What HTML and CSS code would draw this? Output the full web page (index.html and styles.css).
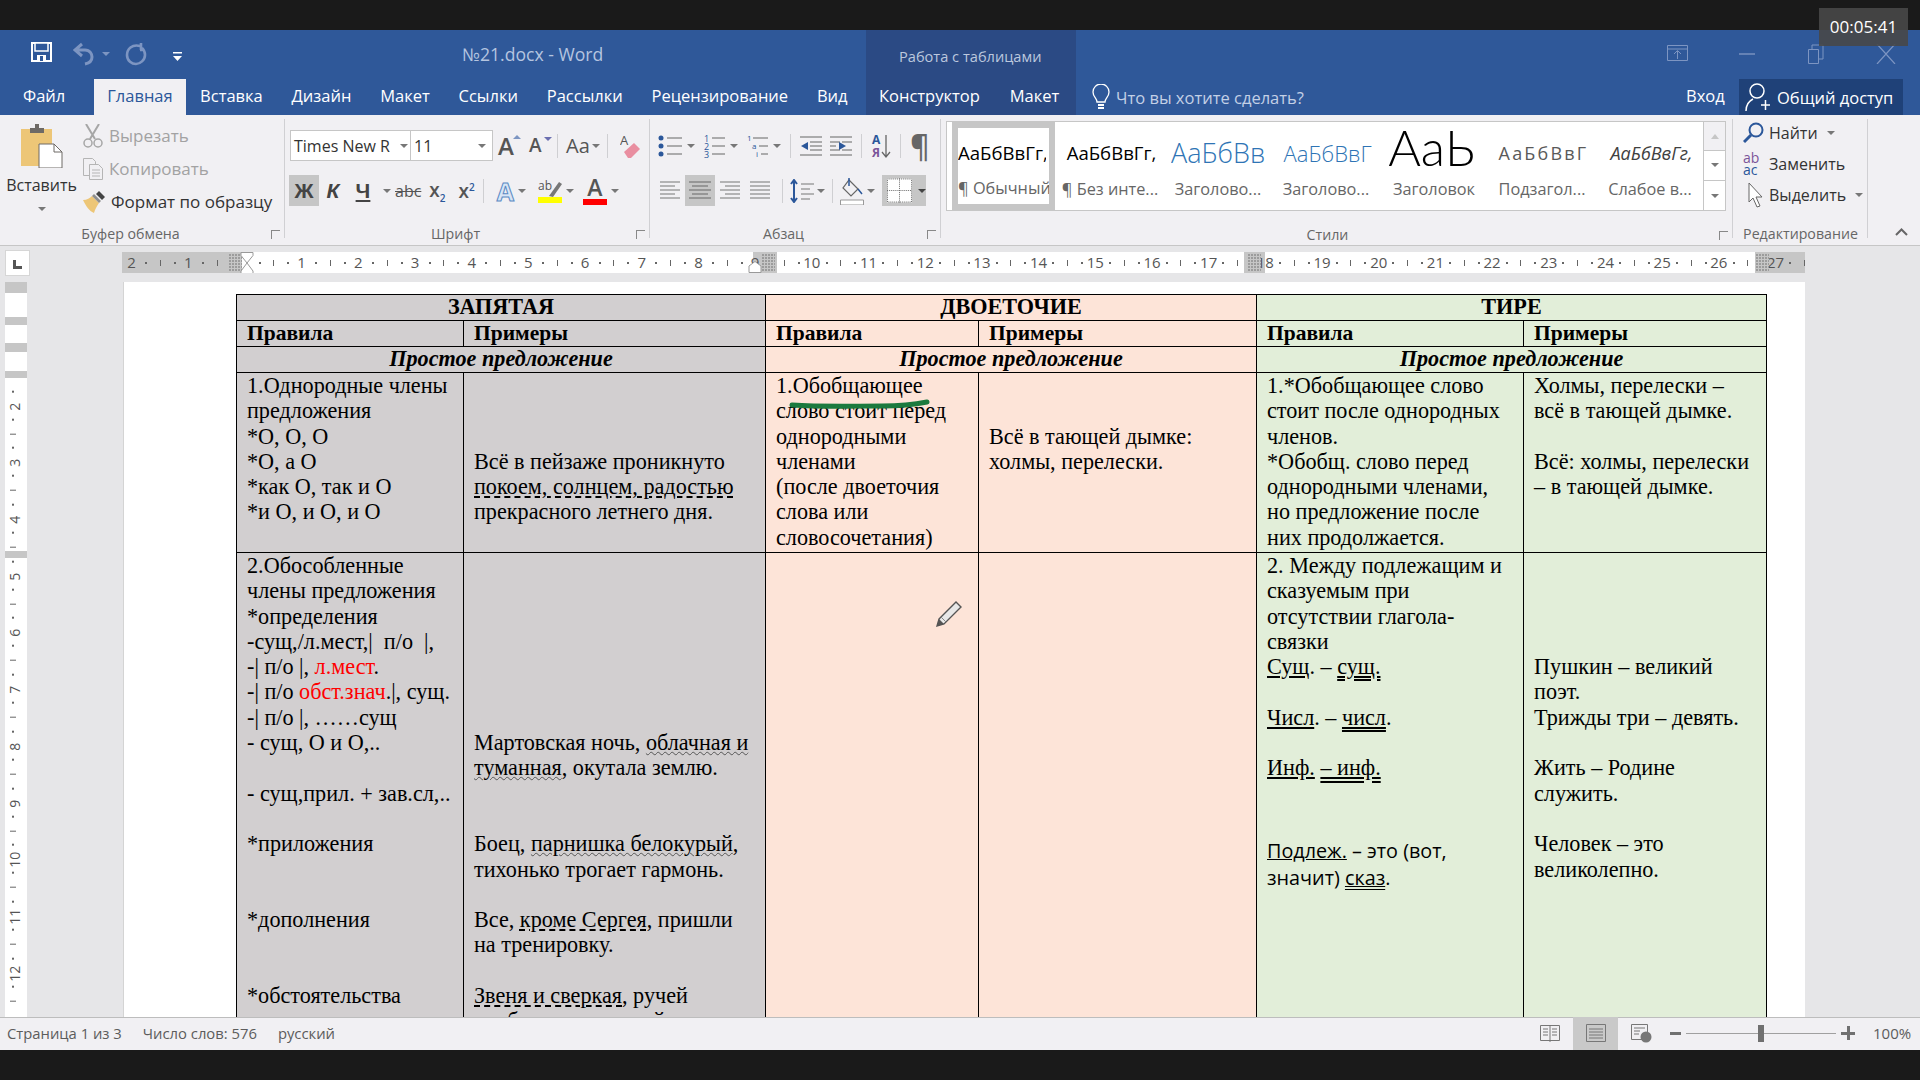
FILE: index.html
```html
<!DOCTYPE html>
<html lang="ru">
<head>
    <meta charset="UTF-8">
    <title>№21.docx - Word</title>
    <link rel="stylesheet" href="styles.css">
</head>
<body>
<div class="timer">00:05:41</div>
<div class="blackbar"></div>

<header class="head">
    <div class="title-row">
        <div class="qat">
            <svg width="21" height="20" viewBox="0 0 21 20"><path d="M1 1h19v18H1z" fill="none" stroke="#fff" stroke-width="2"/><path d="M4 1h13v8H4z" fill="#2f5899" stroke="#fff" stroke-width="1.5"/><path d="M6 13h9v6H6z" fill="#fff"/><path d="M9 14h3v5H9z" fill="#2f5899"/></svg>
            <svg class="undo" width="23" height="24" viewBox="0 0 23 24"><path d="M9 2 2 8l7 6M3 8h9c5 0 7 4 7 7s-2 6-7 7" fill="none" stroke="#7d95c2" stroke-width="3"/></svg>
            <span class="caret faded undo-caret"></span>
            <svg class="redo" width="22" height="24" viewBox="0 0 22 24"><path d="M15 4c-8-2-13 3-13 9s5 9 9 9 9-4 9-9c0-3-1-5-3-7M16 1v7h-1" fill="none" stroke="#7d95c2" stroke-width="2.6"/></svg>
            <svg class="qat-more" width="9" height="11" viewBox="0 0 9 11"><path d="M0 1h9v1.5H0z" fill="#fff"/><path d="M0 5h9L4.5 10z" fill="#fff"/></svg>
        </div>
        <div class="doc-title">№21.docx - Word</div>
        <div class="context-title">Работа с таблицами</div>
        <div class="win-btns">
            <svg width="21" height="16" viewBox="0 0 21 16"><path d="M.5.5h20v15H.5zM.5 4h20M10.500 14V6M7 9l3.500-3.500L14 9" fill="none" stroke="#7d95c2"/></svg>
            <svg class="win-min" width="16" height="2" viewBox="0 0 16 2"><path d="M0 1h16" stroke="#7d95c2" stroke-width="1.400"/></svg>
            <svg class="win-max" width="16" height="20" viewBox="0 0 16 20"><path d="M.5 5.500h10v14H.5zM4 5V1h11v14h-4" fill="none" stroke="#7d95c2"/></svg>
            <svg class="win-close" width="20" height="20" viewBox="0 0 20 20"><path d="m1 0 18 20M19 0 1 20" stroke="#7d95c2" stroke-width="1.200"/></svg>
        </div>
    </div>
    <nav class="tabs">
        <div class="main-tabs">
            <a class="tab file-tab">Файл</a>
            <a class="tab active">Главная</a>
            <a class="tab">Вставка</a>
            <a class="tab">Дизайн</a>
            <a class="tab">Макет</a>
            <a class="tab">Ссылки</a>
            <a class="tab">Рассылки</a>
            <a class="tab">Рецензирование</a>
            <a class="tab">Вид</a>
        </div>
        <div class="context-tabs">
            <a class="tab">Конструктор</a>
            <a class="tab">Макет</a>
        </div>
        <div class="tell-me">
            <svg width="18" height="27" viewBox="0 0 18 27"><path d="M5 18c0-4-4-5-4-10a8 8 0 0 1 16 0c0 5-4 6-4 10z" fill="none" stroke="#fff" stroke-width="1.300"/><path d="M6 21h6M6 24h6" stroke="#fff" stroke-width="2"/></svg>
            <span>Что вы хотите сделать?</span>
        </div>
        <a class="login">Вход</a>
        <a class="share">
            <svg width="26" height="30" viewBox="0 0 26 30"><circle cx="12" cy="9" r="7" fill="none" stroke="#fff" stroke-width="1.500"/><path d="M1 29c0-6 3-10 7-12M16 23h9M20.500 18v10" fill="none" stroke="#fff" stroke-width="1.500"/></svg>
            Общий доступ
        </a>
    </nav>
</header>

<section class="ribbon">
    <div class="group clipboard">
        <div class="group-body clip-body">
            <div class="paste">
                <svg width="42" height="44" viewBox="0 0 42 44"><path d="M0 5h31v37H0z" fill="#edc677"/><path d="M9 4h5V0h4v4h5v5H9z" fill="#6e6a66"/><path d="M18 20h15l8 8v16H18z" fill="#fff" stroke="#6e6a66"/><path d="M33 20v8h8" fill="none" stroke="#6e6a66"/></svg>
                <span>Вставить</span>
                <i class="caret"></i>
            </div>
            <ul class="clip-list">
                <li class="off">
                    <svg width="20" height="24" viewBox="0 0 20 24"><path d="m3 0 9 15M16 0 7 15" stroke="#a6a6a6" stroke-width="2"/><circle cx="5" cy="19" r="4" fill="none" stroke="#a6a6a6" stroke-width="1.500"/><circle cx="15" cy="19" r="4" fill="none" stroke="#a6a6a6" stroke-width="1.500"/></svg>
                    Вырезать
                </li>
                <li class="off">
                    <svg width="20" height="22" viewBox="0 0 20 22"><path d="M.5.5h9l3 3v14H.5z" fill="#f1f0f3" stroke="#b5b5b5"/><path d="M6.500 6.500h9l4 4v11h-13z" fill="#f1f0f3" stroke="#b5b5b5"/><path d="M9 12h8M9 15h8M9 18h8" stroke="#b5b5b5"/></svg>
                    Копировать
                </li>
                <li>
                    <svg width="22" height="22" viewBox="0 0 22 22"><path d="M0 9c4 0 7-2 9-4l7 7c-2 3-4 6-5 10C6 20 3 15 0 9z" fill="#edc677"/><path d="m9 5 7 7 2-2-7-7z" fill="#8f8f8f"/><path d="m13 3 3-3 6 6-3 3z" fill="#444"/></svg>
                    Формат по образцу
                </li>
            </ul>
        </div>
        <div class="group-label">Буфер обмена<span class="launcher"></span></div>
    </div>

    <div class="group font">
        <div class="group-body rows">
            <div class="row font-top">
                <div class="combo name-box">Times New R<i class="caret"></i></div>
                <div class="combo size-box">11<i class="caret"></i></div>
                <span class="grow-a big">A<b class="up"></b></span>
                <span class="grow-a small">A<b class="down"></b></span>
                <i class="sep"></i>
                <span class="case-a">Aa</span><i class="caret"></i>
                <i class="sep"></i>
                <svg class="eraser" width="20" height="26" viewBox="0 0 20 26"><text x="0" y="12" font-size="13" fill="#555">A</text><path d="m4 19 10-9 6 6-9 9H8z" fill="#e98ea0"/></svg>
            </div>
            <div class="row font-bottom">
                <span class="fmt on bold">Ж</span>
                <span class="fmt italic">К</span>
                <span class="fmt under">Ч</span><i class="caret"></i>
                <span class="strike">abc</span>
                <span class="script">x<sub>2</sub></span>
                <span class="script">x<sup>2</sup></span>
                <i class="sep"></i>
                <span class="effect-a">A</span><i class="caret"></i>
                <span class="marker">
                    <svg width="24" height="18" viewBox="0 0 24 18"><text x="0" y="11" font-size="12" fill="#555">ab</text><path d="m11 17 10-14 3 2-9 13z" fill="#777"/></svg>
                    <i class="yellow"></i>
                </span><i class="caret"></i>
                <span class="color-a">A<i class="red"></i></span><i class="caret"></i>
            </div>
        </div>
        <div class="group-label">Шрифт<span class="launcher"></span></div>
    </div>

    <div class="group para">
        <div class="group-body rows">
            <div class="row para-top">
                <svg width="24" height="22" viewBox="0 0 24 22"><g fill="#2b579a"><circle cx="3" cy="3" r="2.500"/><circle cx="3" cy="11" r="2.500"/><circle cx="3" cy="19" r="2.500"/></g><path d="M9 3h15M9 11h15M9 19h15" stroke="#666" stroke-width="1.200"/></svg><i class="caret"></i>
                <svg class="ml" width="21" height="24" viewBox="0 0 21 24"><g fill="#2b579a" font-size="9"><text x="0" y="8">1</text><text x="0" y="16">2</text><text x="0" y="24">3</text></g><path d="M8 4h13M8 12h13M8 20h13" stroke="#666" stroke-width="1.200"/></svg><i class="caret"></i>
                <svg class="ml" width="21" height="24" viewBox="0 0 21 24"><g font-size="8"><text x="0" y="7" fill="#2b579a">1</text><text x="5" y="15" fill="#2b579a">a</text><text x="9" y="23" fill="#2b579a">i</text></g><path d="M6 4h15M12 12h9M14 20h7" stroke="#666" stroke-width="1.200"/></svg><i class="caret"></i>
                <i class="sep"></i>
                <svg width="22" height="20" viewBox="0 0 22 20"><path d="M0 1h22M10 6h12M10 10h12M10 14h12M0 19h22" stroke="#666" stroke-width="1.200"/><path d="M8 6v8l-7-4z" fill="#2b579a"/></svg>
                <svg class="ml-s" width="22" height="20" viewBox="0 0 22 20"><path d="M0 1h22M0 6h10M0 10h6M0 14h10M0 19h22M12 6h10M12 14h10" stroke="#666" stroke-width="1.200"/><path d="M6 6v8l7-4z" fill="#2b579a" transform="translate(3)"/></svg>
                <i class="sep"></i>
                <svg width="20" height="26" viewBox="0 0 20 26"><text x="1" y="11" font-size="12" font-weight="700" fill="#2b579a">А</text><text x="1" y="24" font-size="12" font-weight="700" fill="#7a5599">Я</text><path d="M15 2v21M11 19l4 5 4-5" fill="none" stroke="#666" stroke-width="1.300"/></svg>
                <i class="sep"></i>
                <span class="pilcrow">¶</span>
            </div>
            <div class="row para-bottom">
                <svg class="align" width="30" height="31" viewBox="0 0 30 31"><path d="M5 7h20M5 11h15M5 15h20M5 19h15M5 23h20" stroke="#777" stroke-width="1.200"/></svg>
                <svg class="align on" width="30" height="31" viewBox="0 0 30 31"><path d="M4 7h22M7 11h16M4 15h22M7 19h16M4 23h22" stroke="#666" stroke-width="1.200"/></svg>
                <svg class="align" width="30" height="31" viewBox="0 0 30 31"><path d="M5 7h20M10 11h15M5 15h20M10 19h15M5 23h20" stroke="#777" stroke-width="1.200"/></svg>
                <svg class="align" width="30" height="31" viewBox="0 0 30 31"><path d="M5 7h20M5 11h20M5 15h20M5 19h20M5 23h20" stroke="#777" stroke-width="1.200"/></svg>
                <i class="sep"></i>
                <svg width="24" height="24" viewBox="0 0 24 24"><path d="M4 1v22M1 5l3-4 3 4M1 19l3 4 3-4" fill="none" stroke="#2b579a" stroke-width="2"/><path d="M11 5h13M11 10h9M11 15h13M11 20h9" stroke="#777" stroke-width="1.200"/></svg><i class="caret"></i>
                <i class="sep"></i>
                <svg width="24" height="28" viewBox="0 0 24 28"><path d="m9 3 9 9-7 7-8-8z" fill="none" stroke="#666" stroke-width="1.200"/><path d="M9 1v8M18 12l4 5" fill="none" stroke="#2b579a" stroke-width="1.500"/><path d="M.5 23h23v5H.5z" fill="#fff" stroke="#999"/></svg><i class="caret"></i>
                <span class="borders">
                    <svg width="26" height="25" viewBox="0 0 26 25"><path d="M0 0h26v25H0z" fill="#fff"/><path d="M.5.5h25v24H.5zM13 0v25M0 12.500h26" fill="none" stroke="#666" stroke-dasharray="1 1"/></svg>
                    <i class="caret dark"></i>
                </span>
            </div>
        </div>
        <div class="group-label">Абзац<span class="launcher"></span></div>
    </div>

    <div class="group styles">
        <div class="gallery">
            <div class="gal-item selected">
                <div class="sample">АаБбВвГг,</div>
                <div class="gal-name">¶ Обычный</div>
            </div>
            <div class="gal-item">
                <div class="sample">АаБбВвГг,</div>
                <div class="gal-name">¶ Без инте...</div>
            </div>
            <div class="gal-item">
                <div class="sample h1">АаБбВв</div>
                <div class="gal-name">Заголово...</div>
            </div>
            <div class="gal-item">
                <div class="sample h2">АаБбВвГ</div>
                <div class="gal-name">Заголово...</div>
            </div>
            <div class="gal-item">
                <div class="sample title">АаЬ</div>
                <div class="gal-name">Заголовок</div>
            </div>
            <div class="gal-item">
                <div class="sample sub">АаБбВвГ</div>
                <div class="gal-name">Подзагол...</div>
            </div>
            <div class="gal-item">
                <div class="sample em">АаБбВвГг,</div>
                <div class="gal-name">Слабое в...</div>
            </div>
            <div class="gal-scroll">
                <span class="up-btn"><i class="caret light up"></i></span>
                <span><i class="caret"></i></span>
                <span class="more"><i class="caret"></i></span>
            </div>
        </div>
        <div class="group-label">Стили<span class="launcher"></span></div>
    </div>

    <div class="group editing">
        <ul class="edit-list">
            <li>
                <svg width="22" height="22" viewBox="0 0 22 22"><circle cx="13" cy="8" r="6.500" fill="none" stroke="#2b579a" stroke-width="2"/><path d="m8 13-7 7" stroke="#2b579a" stroke-width="3"/></svg>
                Найти<i class="caret"></i>
            </li>
            <li>
                <span class="ab"><b>ab</b><b>ac</b></span>
                Заменить
            </li>
            <li>
                <svg width="22" height="26" viewBox="0 0 22 26"><path d="M6 1v19l4-4 4 9 3-1-4-9h6z" fill="#fff" stroke="#666"/></svg>
                Выделить<i class="caret"></i>
            </li>
        </ul>
        <div class="group-label">Редактирование</div>
    </div>
    <svg class="collapse" width="13" height="8" viewBox="0 0 13 8"><path d="m1 7 5.500-5.500L12 7" fill="none" stroke="#666" stroke-width="2"/></svg>
</section>

<div class="ruler-row">
    <div class="tab-stop"><i></i></div>
    <div class="hruler">
        <span>2</span><span>1</span><span></span>
        <span>1</span><span>2</span><span>3</span><span>4</span><span>5</span><span>6</span><span>7</span><span>8</span><span>9</span>
        <span>10</span><span>11</span><span>12</span><span>13</span><span>14</span><span>15</span><span>16</span><span>17</span><span>18</span>
        <span>19</span><span>20</span><span>21</span><span>22</span><span>23</span><span>24</span><span>25</span><span>26</span><span>27</span><span></span>
        <b class="hatch hatch-left"></b>
        <b class="hatch hatch-a"></b>
        <b class="hatch hatch-b"></b>
        <b class="hatch hatch-c"></b>
        <svg class="indent-left" width="14" height="32" viewBox="0 0 14 32"><path d="M1 .5h12v3L7 11 1 3.500zM7 11l6 8v3H1v-3zM1 22h12v9H1z" fill="#fff" stroke="#999"/></svg>
        <svg class="indent-right" width="14" height="12" viewBox="0 0 14 12"><path d="M1 5 7 .5 13 5v6.500H1z" fill="#fff" stroke="#999"/></svg>
    </div>
</div>

<main class="workspace">
    <aside class="vruler">
        <span></span><span>2</span><span>3</span><span>4</span><span>5</span><span>6</span><span>7</span><span>8</span><span>9</span><span>10</span><span>11</span><span>12</span><span></span>
    </aside>
    <div class="page">
        <table class="rules">
            <colgroup>
                <col class="c1"><col class="c2"><col class="c3"><col class="c4"><col class="c5"><col class="c6">
            </colgroup>
            <tr class="head-row">
                <th colspan="2" class="gray">ЗАПЯТАЯ</th>
                <th colspan="2" class="peach">ДВОЕТОЧИЕ</th>
                <th colspan="2" class="green">ТИРЕ</th>
            </tr>
            <tr class="head-row sub-row">
                <th class="gray">Правила</th><th class="gray">Примеры</th>
                <th class="peach">Правила</th><th class="peach">Примеры</th>
                <th class="green">Правила</th><th class="green">Примеры</th>
            </tr>
            <tr class="head-row simple-row">
                <th colspan="2" class="gray">Простое предложение</th>
                <th colspan="2" class="peach">Простое предложение</th>
                <th colspan="2" class="green">Простое предложение</th>
            </tr>
            <tr class="first-row">
                <td class="gray">1.Однородные члены<br>предложения<br>*О, О, О<br>*О, а О<br>*как О, так и О<br>*и О, и О, и О</td>
                <td class="gray"><br><br><br>Всё в пейзаже проникнуто<br><u class="dash">покоем, солнцем, радостью</u><br>прекрасного летнего дня.</td>
                <td class="peach">1.Обобщающее<br>слово стоит перед<br>однородными<br>членами<br>(после двоеточия<br>слова или<br>словосочетания)</td>
                <td class="peach"><br><br>Всё в тающей дымке:<br>холмы, перелески.</td>
                <td class="green">1.*Обобщающее слово<br>стоит после однородных<br>членов.<br>*Обобщ. слово перед<br>однородными членами,<br>но предложение после<br>них продолжается.</td>
                <td class="green">Холмы, перелески –<br>всё в тающей дымке.<br><br>Всё: холмы, перелески<br>– в тающей дымке.</td>
            </tr>
            <tr class="long-row">
                <td class="gray">2.Обособленные<br>члены предложения<br>*определения<br>-сущ,/л.мест,|&nbsp; п/о &nbsp;|,<br>-| п/о |, <span class="red">л.мест</span>.<br>-| п/о <span class="red">обст.знач</span>.|, сущ.<br>-| п/о |, ……сущ<br>- сущ, О и О,..<br><br>- сущ,прил. + зав.сл,..<br><br>*приложения<br><br><br>*дополнения<br><br><br>*обстоятельства</td>
                <td class="gray"><br><br><br><br><br><br><br>Мартовская ночь, <u class="wave">облачная и</u><br><u class="wave">туманная</u>, окутала землю.<br><br><br>Боец, <u class="wave">парнишка белокурый</u>,<br>тихонько трогает гармонь.<br><br>Все, <u class="dash">кроме Сергея</u>, пришли<br>на тренировку.<br><br><u class="dash">Звеня и сверкая</u>, ручей<br>&nbsp;&nbsp;&nbsp;&nbsp;&nbsp;&nbsp;бежит по лесной тропе,</td>
                <td class="peach"></td>
                <td class="peach"></td>
                <td class="green">2. Между подлежащим и<br>сказуемым при<br>отсутствии глагола-<br>связки<br><u>Сущ</u>. – <u class="dbl">сущ.</u><br><br><u>Числ</u>. – <u class="dbl">числ</u>.<br><br><u>Инф.</u> <u class="dbl">– инф.</u><div class="sans"><u>Подлеж.</u> – это (вот,<br>значит) <u class="dbl">сказ</u>.</div></td>
                <td class="green"><br><br><br><br>Пушкин – великий<br>поэт.<br>Трижды три – девять.<br><br>Жить – Родине<br>служить.<br><br>Человек – это<br>великолепно.</td>
            </tr>
        </table>
        <svg class="scribble" width="146" height="10" viewBox="0 0 146 10"><path d="M3 6c30 2 60 1 90 1 15 0 30-1 45-4" fill="none" stroke="#1b7a3e" stroke-width="5" stroke-linecap="round"/></svg>
        <svg class="pencil" width="30" height="28" viewBox="0 0 30 28"><path d="M6 19 23 2l5 5L11 24l-7 2z" fill="#e8e8e8" stroke="#555" stroke-width="1.400"/><path d="m4 26 2-7 5 5z" fill="#555"/><path d="m8 17 5 5" stroke="#888"/></svg>
    </div>
</main>

<footer class="status">
    <span>Страница 1 из 3</span>
    <span>Число слов: 576</span>
    <span>русский</span>
    <div class="view-btns">
        <svg width="20" height="19" viewBox="0 0 20 19"><path d="M.5 1.500h19v15H.5zM10 1v17M3 5h5M3 8h5M3 11h5M12 5h5M12 8h5M12 11h5" fill="none" stroke="#777"/></svg>
        <span class="view-on"><svg width="20" height="18" viewBox="0 0 20 18"><path d="M.5.5h19v17H.5zM3 5h14M3 8h14M3 11h14M3 14h14" fill="none" stroke="#777"/></svg></span>
        <svg width="21" height="19" viewBox="0 0 21 19"><path d="M.5.500h16v15H.5zM3 4h11M3 7h6M3 10h5" fill="none" stroke="#777"/><circle cx="15" cy="13" r="5.500" fill="#777"/></svg>
        <div class="zoom">
            <i class="minus"></i>
            <div class="slider"><b></b></div>
            <i class="plus"></i>
        </div>
        <span class="pct">100%</span>
    </div>
</footer>
<div class="blackbar bottom"></div>
</body>
</html>
```

FILE: styles.css
```css
* {
    box-sizing: border-box;
    margin: 0;
    padding: 0;
}

body {
    width: 1920px;
    height: 1080px;
    overflow: hidden;
    display: flex;
    flex-direction: column;
    position: relative;
    font-family: "Open Sans", "Liberation Sans", sans-serif;
    background-color: #1a1a1a;
    color: #444;
}

i, b.hatch {
    display: block;
    font-style: normal;
}

ul {
    list-style-type: none;
}

.blackbar {
    height: 30px;
    flex: none;
    background-color: #1a1a1a;
}

.timer {
    position: absolute;
    top: 8px;
    left: 1819px;
    width: 89px;
    height: 38px;
    z-index: 5;
    background-color: rgba(72, 72, 72, 0.9);
    color: #fff;
    font-size: 17px;
    line-height: 38px;
    text-align: center;
}

/* Title bar + tabs */
.head {
    height: 85px;
    flex: none;
    background-color: #2f5899;
    color: #fff;
}

.title-row {
    height: 49px;
    display: flex;
}

.qat {
    width: 462px;
    padding: 12px 0 0 31px;
    display: flex;
    align-items: flex-start;
}

.undo { margin-left: 21px; }
.undo-caret { margin: 10px 0 0 6px; }
.redo { margin-left: 15px; }
.qat-more { margin: 9px 0 0 26px; }

.doc-title {
    width: 404px;
    font-size: 17.600px;
    line-height: 48px;
    color: #b5c5e0;
}

.context-title {
    width: 210px;
    padding-left: 33px;
    background-color: #2b4a84;
    color: #bcc8de;
    font-size: 14.600px;
    line-height: 52px;
}

.win-btns {
    padding: 15px 0 0 591px;
    display: flex;
    align-items: flex-start;
}

.win-min { margin: 8px 0 0 51px; }
.win-max { margin: -1px 0 0 53px; }
.win-close { margin: -1px 0 0 52px; }

.tabs {
    height: 36px;
    display: flex;
    align-items: stretch;
    font-size: 16.500px;
}

.main-tabs {
    width: 866px;
    display: flex;
}

.tab {
    padding: 0 14.400px;
    line-height: 34px;
}

.file-tab {
    padding: 0 15px 0 23px;
    margin-right: 14px;
}

.tab.active {
    background-color: #f1f0f3;
    color: #2b579a;
    padding: 0 13px;
}

.context-tabs {
    width: 210px;
    display: flex;
    background-color: #2b4a84;
}

.context-tabs .tab {
    padding: 0 15px 0 13px;
}

.context-tabs .tab + .tab {
    padding-left: 15px;
}

.tell-me {
    width: 610px;
    padding-left: 16px;
    display: flex;
    align-items: center;
    gap: 6px;
    color: #c3d0e6;
}

.login {
    width: 53px;
    line-height: 34px;
}

.share {
    width: 164px;
    padding-left: 6px;
    display: flex;
    align-items: center;
    gap: 6px;
    background-color: #1f4178;
}

/* Ribbon */
.ribbon {
    height: 131px;
    flex: none;
    display: flex;
    position: relative;
    background-color: #f1f0f3;
    border-bottom: 1px solid #c6c6c6;
    font-size: 16px;
}

.group {
    height: 126px;
    margin-top: 4px;
    display: flex;
    flex-direction: column;
    background: linear-gradient(#d0d0d3, #d0d0d3) right top / 1px 119px no-repeat;
}

.clipboard { width: 285px; }
.font { width: 365px; }
.para { width: 291px; }
.styles { width: 792px; }
.editing { width: 135px; }

.group-body {
    flex: 1;
}

.group-label {
    height: 24px;
    position: relative;
    text-align: center;
    padding-right: 24px;
    font-size: 14.200px;
    line-height: 26px;
    color: #666;
}

.editing .group-label {
    padding-right: 0;
}

.launcher {
    position: absolute;
    right: 5px;
    bottom: 6px;
    width: 9px;
    height: 9px;
    border-left: 1px solid #888;
    border-top: 1px solid #888;
}

.caret {
    width: 0;
    height: 0;
    flex: none;
    border-left: 4px solid transparent;
    border-right: 4px solid transparent;
    border-top: 4px solid #777;
}

.caret.faded { border-top-color: #7d95c2; }
.caret.dark { border-top-color: #444; }

.sep {
    width: 1px;
    height: 24px;
    flex: none;
    background-color: #cfcfd2;
}

/* Clipboard */
.clip-body {
    display: flex;
}

.paste {
    width: 83px;
    padding-top: 5px;
    display: flex;
    flex-direction: column;
    align-items: center;
    font-size: 16px;
    color: #333;
}

.paste span {
    margin-top: 4px;
    line-height: 26px;
}

.paste .caret {
    margin-top: 9px;
}

.clip-list li {
    height: 33px;
    display: flex;
    align-items: center;
    gap: 6px;
    font-size: 17px;
    color: #333;
    white-space: nowrap;
}

.clip-list li.off {
    color: #a2a2a2;
}

/* Font */
.rows {
    display: flex;
    flex-direction: column;
}

.row {
    display: flex;
    align-items: center;
}

.font-top {
    height: 31px;
    margin-top: 11px;
    padding-left: 5px;
}

.combo {
    height: 31px;
    display: flex;
    align-items: center;
    justify-content: space-between;
    padding: 0 6px 0 3px;
    background-color: #fff;
    border: 1px solid #c6c6c6;
    font-size: 16px;
    color: #333;
    white-space: nowrap;
}

.name-box { width: 121px; padding-right: 2px; }
.size-box { width: 82px; border-left: 0; }

.grow-a {
    position: relative;
    color: #555;
    font-size: 24px;
    line-height: 1;
}

.grow-a.big { margin-left: 5px; width: 31px; font-weight: 600; }
.grow-a.small { width: 28px; font-size: 19px; font-weight: 600; }

.grow-a b {
    position: absolute;
    top: 1px;
    left: 15px;
    border-left: 4px solid transparent;
    border-right: 4px solid transparent;
}

.grow-a .up { border-bottom: 4px solid #7d95c2; }
.grow-a .down { border-top: 4px solid #6b6fb0; }

.font-top .sep { margin: 0 8px 0 0; }
.font-top .caret + .sep { margin-left: 7px; }
.font-top .caret { margin-left: 2px; }
.name-box .caret, .size-box .caret { margin-left: 0; }

.case-a {
    font-size: 20px;
    line-height: 1;
    color: #555;
}

.eraser { margin-left: 4px; }

.font-bottom {
    height: 31px;
    margin-top: 14px;
    padding-left: 4px;
}

.fmt {
    height: 31px;
    line-height: 31px;
    text-align: center;
    font-family: "Liberation Sans", sans-serif;
    font-size: 21px;
    font-weight: 700;
    color: #444;
}

.fmt.bold { width: 30px; background-color: #c6c6c6; }
.fmt.italic { width: 28px; font-style: italic; }
.fmt.under { width: 32px; text-decoration: underline; }

.font-bottom .caret { margin-left: 4px; }

.strike {
    margin-left: 4px;
    font-size: 16px;
    color: #555;
    text-decoration: line-through;
}

.script {
    margin-left: 8px;
    font-size: 19px;
    font-weight: 600;
    color: #555;
}

.script + .script {
    margin-left: 13px;
}

.script sub, .script sup {
    font-size: 10px;
    color: #2b579a;
}

.font-bottom .sep { margin: 0 13px 0 8px; }

.effect-a {
    font-size: 25px;
    font-weight: 700;
    line-height: 28px;
    color: #d8e6f6;
    -webkit-text-stroke: 1px #5b8ac4;
}

.marker {
    margin-left: 12px;
    width: 24px;
    display: flex;
    flex-direction: column;
}

.marker .yellow {
    height: 6px;
    background-color: #ffff00;
}

.color-a {
    margin-left: 9px;
    width: 24px;
    display: flex;
    flex-direction: column;
    align-items: center;
    font-size: 23px;
    font-weight: 600;
    line-height: 23px;
    color: #555;
}

.color-a .red {
    width: 24px;
    height: 6px;
    background-color: #f00;
}

/* Paragraph */
.para-top {
    height: 31px;
    margin-top: 11px;
    padding-left: 8px;
}

.para-top .caret { margin-left: 5px; }
.ml { margin-left: 9px; }
.ml-s { margin-left: 8px; }
.para-top .sep { margin: 0 9px; }

.pilcrow {
    font-size: 30px;
    line-height: 1;
    font-weight: 600;
    color: #666;
}

.para-bottom {
    height: 31px;
    margin-top: 14px;
    padding-left: 5px;
}

.align.on { background-color: #c6c6c6; }
.para-bottom .sep { margin: 0 7px; }
.para-bottom .caret { margin-left: 3px; }

.borders {
    height: 31px;
    margin-left: 7px;
    padding: 0 0 0 5px;
    width: 44px;
    display: flex;
    align-items: center;
    gap: 3px;
    background-color: #c6c6c6;
}

/* Styles gallery */
.styles {
    padding-left: 5px;
}

.gallery {
    flex: 1;
    width: 780px;
    max-height: 90px;
    margin: 2px 0 0;
    display: flex;
    position: relative;
    background-color: #fff;
    border: 1px solid #c6c6c6;
    padding-left: 5px;
}

.styles .group-label {
    margin-top: 11px;
}

.gal-item {
    width: 108px;
    flex: none;
    overflow: hidden;
    text-align: center;
    white-space: nowrap;
    padding-right: 8px;
}

.gal-item.selected {
    width: 103px;
    margin-right: 5px;
    padding-right: 3px;
    border: 6px solid #c6c6c6;
}

.sample {
    height: 51px;
    margin: 0 0 0 3px;
    overflow: hidden;
    line-height: 62px;
    font-size: 18.600px;
    color: #000;
}

.selected .sample {
    height: 45px;
    line-height: 50px;
    margin: 0;
}

.sample.h1 { font-size: 27px; color: #2e74b5; text-align: left; font-weight: 300; }
.sample.h2 { font-size: 22px; color: #2e74b5; font-weight: 300; }
.sample.title { font-size: 50px; line-height: 50px; font-weight: 300; font-family: Lato, "Open Sans", sans-serif; margin: 0 5px 0 0; }
.sample.sub { font-size: 18px; color: #5a5a5a; letter-spacing: 2.200px; }
.sample.em { font-style: italic; color: #404040; font-size: 18px; }

.gal-name {
    font-size: 16.300px;
    line-height: 33px;
    color: #666;
}

.selected .gal-name {
    line-height: 31px;
}

.gal-scroll {
    position: absolute;
    right: 0;
    top: 0;
    bottom: 0;
    width: 22px;
    display: flex;
    flex-direction: column;
    border-left: 1px solid #c6c6c6;
}

.gal-scroll span {
    flex: 1;
    display: flex;
    align-items: center;
    justify-content: center;
    border-bottom: 1px solid #c6c6c6;
}

.gal-scroll .up-btn { background-color: #f1f0f3; }
.gal-scroll .more { border-bottom: 0; border-top: 1px solid #fff; }

.caret.light.up {
    border-top: 0;
    border-bottom: 5px solid #c6c6c6;
}

/* Editing */
.edit-list {
    flex: 1;
    margin-top: -2px;
    padding: 0 0 0 10px;
}

.edit-list li {
    height: 31px;
    display: flex;
    align-items: center;
    gap: 4px;
    color: #333;
}

.edit-list svg { flex: none; }
.edit-list .caret { margin-left: 5px; }

.ab {
    display: flex;
    flex-direction: column;
    width: 22px;
    font-size: 14px;
    line-height: 12px;
    font-weight: 400;
}

.ab b:first-child { color: #7a5599; font-weight: 400; }
.ab b:last-child { color: #2b579a; font-weight: 400; }

.collapse {
    position: absolute;
    right: 12px;
    bottom: 9px;
}

/* Rulers */
.ruler-row {
    height: 36px;
    flex: none;
    display: flex;
    padding: 6px 0 0 5px;
    background-color: #e6e6e8;
}

.tab-stop {
    width: 25px;
    height: 26px;
    margin-top: -2px;
    padding: 9px 0 0 7px;
    background-color: #fff;
    border: 1px solid #d6d6d6;
}

.tab-stop i {
    width: 9px;
    height: 9px;
    border-left: 3px solid #555;
    border-bottom: 3px solid #555;
}

.hruler {
    width: 1683px;
    height: 21px;
    margin-left: 92px;
    position: relative;
    overflow: hidden;
    display: flex;
    background: linear-gradient(to right, #c6c6c6 120px, #fff 120px, #fff 631px, #c6c6c6 631px, #c6c6c6 655px, #fff 655px, #fff 1122px, #c6c6c6 1122px, #c6c6c6 1143px, #fff 1143px, #fff 1633px, #c6c6c6 1633px);
    font-size: 15px;
    color: #555;
    line-height: 21px;
}

.hruler span {
    width: 56.700px;
    flex: none;
    text-align: center;
    background-image:
        linear-gradient(#666, #666),
        linear-gradient(#666, #666),
        linear-gradient(#666, #666);
    background-repeat: no-repeat;
    background-size: 1px 6px, 2px 2px, 2px 2px;
    background-position: 0 8px, 14px 10px, 42px 10px;
}

.hruler span:first-child {
    margin-left: -18.750px;
}

.hatch {
    position: absolute;
    top: 2px;
    width: 13px;
    height: 17px;
    background-color: #9c9c9c;
    background-image:
        repeating-linear-gradient(to right, transparent 0 2px, #c6c6c6 2px 3px),
        repeating-linear-gradient(to bottom, transparent 0 2px, #c6c6c6 2px 3px);
}

.hatch-left { left: 107px; }
.hatch-a { left: 640px; }
.hatch-b { left: 1126px; }
.hatch-c { left: 1634px; }

.indent-left {
    position: absolute;
    top: 0;
    left: 118px;
}

.indent-right {
    position: absolute;
    top: 9px;
    left: 626px;
}

/* Document area */
.workspace {
    height: 735px;
    flex: none;
    display: flex;
    overflow: hidden;
    background-color: #e6e6e8;
    position: relative;
}

.vruler {
    width: 22px;
    margin-left: 5px;
    flex: none;
    padding-top: 39px;
    background: linear-gradient(to bottom, #c6c6c6 11px, #fff 11px, #fff 35px, #c6c6c6 35px, #c6c6c6 43px, #fff 43px, #fff 61px, #c6c6c6 61px, #c6c6c6 70px, #fff 70px, #fff 89px, #c6c6c6 89px, #c6c6c6 96px, #fff 96px, #fff 269px, #c6c6c6 269px, #c6c6c6 276px, #fff 276px);
    font-size: 14px;
    color: #555;
}

.vruler span {
    height: 56.700px;
    display: flex;
    align-items: center;
    justify-content: center;
    writing-mode: vertical-rl;
    transform: rotate(180deg);
    background-image:
        linear-gradient(#666, #666),
        linear-gradient(#666, #666),
        linear-gradient(#666, #666);
    background-repeat: no-repeat;
    background-size: 6px 1px, 2px 2px, 2px 2px;
    background-position: 8px 0, 10px 14px, 10px 42px;
}

.page {
    width: 1682px;
    margin-left: 96px;
    flex: none;
    position: relative;
    background-color: #fff;
    padding: 12px 0 0 112px;
    border-left: 1px solid #d4d4d4;
}

.rules {
    width: 1530px;
    table-layout: fixed;
    border-collapse: collapse;
    font-family: "Liberation Serif", serif;
    font-size: 22.200px;
    line-height: 25.300px;
    color: #000;
    white-space: nowrap;
}

.c1 { width: 227px; }
.c2 { width: 302px; }
.c3 { width: 213px; }
.c4 { width: 278px; }
.c5 { width: 267px; }
.c6 { width: 243px; }

.rules th, .rules td {
    border: 1.500px solid #000;
    padding: 0 10px;
    vertical-align: top;
}

.gray { background-color: #d2cfd0; }
.peach { background-color: #fde4d8; }
.green { background-color: #e2eed9; }

.head-row { height: 26px; }
.head-row th { text-align: center; line-height: 24px; }
.sub-row th { text-align: left; font-size: 21.500px; }
.simple-row th { font-style: italic; }
.first-row { height: 180px; }

.red { color: #f00; }

u.dash {
    text-decoration-style: dashed;
}

u.wave {
    text-decoration-style: wavy;
    text-decoration-color: #555;
    text-decoration-thickness: 1px;
}

u.dbl {
    text-decoration-style: double;
}

.sans {
    margin-top: 56px;
    font-family: "Open Sans", sans-serif;
    font-size: 19.800px;
    line-height: 27px;
}

.scribble {
    position: absolute;
    left: 665px;
    top: 117px;
}

.pencil {
    position: absolute;
    left: 809px;
    top: 318px;
}

/* Status bar */
.status {
    height: 33px;
    flex: none;
    display: flex;
    align-items: center;
    padding: 0 0 2px 7px;
    gap: 21px;
    background-color: #f1f0f3;
    border-top: 1px solid #bdbdbd;
    font-size: 14.800px;
    color: #5c5c5c;
}

.view-btns {
    margin-left: auto;
    height: 100%;
    display: flex;
    align-items: center;
}

.view-on {
    width: 45px;
    height: 33px;
    margin: 0 13px;
    display: flex;
    align-items: center;
    justify-content: center;
    background-color: #c9c9c9;
}

.zoom {
    margin-left: 18px;
    display: flex;
    align-items: center;
    gap: 5px;
}

.minus {
    width: 11px;
    height: 3px;
    background-color: #707070;
}

.slider {
    width: 150px;
    height: 1px;
    position: relative;
    background-color: #a0a0a0;
}

.slider b {
    position: absolute;
    left: 72px;
    top: -8px;
    width: 6px;
    height: 17px;
    background-color: #707070;
}

.plus {
    width: 14px;
    height: 14px;
    background:
        linear-gradient(#707070, #707070) center / 14px 3px no-repeat,
        linear-gradient(#707070, #707070) center / 3px 14px no-repeat;
}

.pct {
    width: 47px;
    margin-left: 18px;
    font-size: 15px;
}

.blackbar.bottom {
    flex: 1;
}
```
